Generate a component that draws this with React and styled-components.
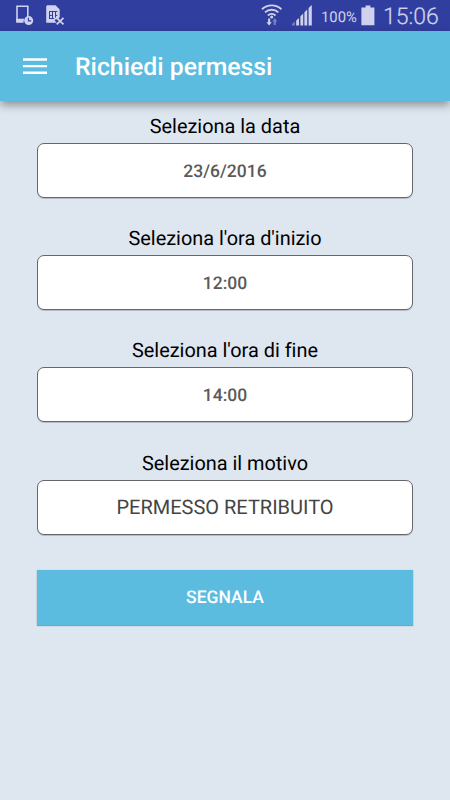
import React from "react";
import styled, { createGlobalStyle } from "styled-components";

const fields = [
  { label: "Seleziona la data", value: "23/6/2016" },
  { label: "Seleziona l'ora d'inizio", value: "12:00" },
  { label: "Seleziona l'ora di fine", value: "14:00" },
  { label: "Seleziona il motivo", value: "PERMESSO RETRIBUITO", large: true },
];

const PhoneClockIcon = () => (
  <svg width="18" height="21" viewBox="0 0 18 21" fill="none">
    <path d="M1 17V1.2h10.8V12" stroke="#cfd2ee" strokeWidth="1.6" />
    <path d="M.2 13.8h8.2a5.6 5.6 0 0 0-.8 4H.2z" fill="#cfd2ee" />
    <circle cx="12.7" cy="15.6" r="4.5" fill="#cfd2ee" />
    <path d="M12.4 12.8v3.1h2.8" stroke="#303f9f" strokeWidth="1.1" />
  </svg>
);

const SimErrorIcon = () => (
  <svg width="19" height="21" viewBox="0 0 19 21" fill="none">
    <path d="M1.2.2h8.3l4.2 4.4v7.7l-2.4 2.3-1.4-.6-1.3 1.4 2.1 2.3H.2V1.2z" fill="#cfd2ee" />
    <path
      d="M3.2 6.5h8.2M3.5 6.5v7.5M3.2 10.4h3M3.2 13.5h5M6.5 6.5v7.5M9.5 6.5v6M9.5 10.4h1.8"
      stroke="#303f9f"
      strokeWidth="1"
    />
    <path d="M10.7 12.8l6.8 6.6M17.5 12.8l-6.8 6.6" stroke="#cfd2ee" strokeWidth="1.7" />
  </svg>
);

const WifiIcon = () => (
  <svg width="22" height="23" viewBox="0 0 22 23" fill="none">
    <g stroke="#cfd2ee" strokeWidth="1.9">
      <path d="M1 5.2a14.3 14.3 0 0 1 19.4 0" />
      <path d="M4 8.4a9.9 9.9 0 0 1 13.4 0" />
      <path d="M6.9 11.5a5.6 5.6 0 0 1 7.6 0" />
    </g>
    <circle cx="10.7" cy="13" r="1.5" fill="#cfd2ee" />
    <path d="M7.1 14.6h2.1v3.6h1.6L8.1 21.6 5.4 18.2h1.7z" fill="#cfd2ee" />
    <path d="M12.7 21v-3.6h-1.4l2.5-3.3 2.5 3.3h-1.5V21z" fill="#7680c2" />
  </svg>
);

const SignalIcon = () => (
  <svg width="20" height="21" viewBox="0 0 20 21">
    <path d="M0 20.5v-1.4l2.8-2.6v4z" fill="#7680c2" />
    <path
      d="M4.2 20.5v-5.1L7 12.9v7.6zM8.4 20.5v-9.2l2.8-2.8v12zM12.4 20.5V7.2l2.8-2.8v16.1zM16.6 20.5V3.1L19.8 0v20.5z"
      fill="#cfd2ee"
    />
  </svg>
);

const BatteryIcon = () => (
  <svg width="14" height="21" viewBox="0 0 14 21">
    <path d="M4.6.4h4.8v2.2h4V20.3H.4V2.6h4.2z" fill="#cfd2ee" />
  </svg>
);

const MenuIcon = () => (
  <svg width="24" height="17" viewBox="0 0 24 17">
    <path d="M0 .3h24v2.4H0zM0 6.9h24v2.4H0zM0 13.5h24v2.4H0z" fill="#fff" />
  </svg>
);

export default function App() {
  return (
    <>
      <GlobalStyle />
      <Screen>
        <StatusBar>
          <PhoneClockIcon />
          <SimErrorIcon />
          <StatusRight>
            <WifiIcon />
            <SignalIcon />
            <BatteryLevel>100%</BatteryLevel>
            <BatteryIcon />
            <Clock>15:06</Clock>
          </StatusRight>
        </StatusBar>

        <AppBar>
          <MenuButton aria-label="Menu">
            <MenuIcon />
          </MenuButton>
          <Title>Richiedi permessi</Title>
        </AppBar>

        <Form>
          {fields.map((field) => (
            <Field key={field.label}>
              <Label>{field.label}</Label>
              <ValueButton $large={field.large}>{field.value}</ValueButton>
            </Field>
          ))}
          <SubmitButton>SEGNALA</SubmitButton>
        </Form>
      </Screen>
    </>
  );
}

/* ========== styled-components ========== */

const GlobalStyle = createGlobalStyle`
  * {
    box-sizing: border-box;
  }

  body {
    margin: 0;
    font-family: Roboto, "Liberation Sans", sans-serif;
    font-variant-ligatures: none;
    text-rendering: geometricPrecision;
  }

  button {
    font-family: inherit;
    text-rendering: inherit;
    cursor: pointer;
  }

  svg {
    display: block;
    flex-shrink: 0;
  }
`;

const Screen = styled.div`
  display: flex;
  flex-direction: column;
  width: 450px;
  height: 800px;
  background: #dee6f0;
  overflow: hidden;
`;

const StatusBar = styled.header`
  display: flex;
  align-items: center;
  gap: 12px;
  height: 31px;
  padding: 0 12px 0 16px;
  background: #303f9f;
  color: #cfd2ee;
`;

const StatusRight = styled.div`
  display: flex;
  align-items: center;
  margin-left: auto;

  svg + svg {
    margin-left: 9px;
  }
`;

const BatteryLevel = styled.span`
  width: 36px;
  margin: 3px 4px 0 9px;
  font-size: 14.8px;
  white-space: nowrap;
`;

const Clock = styled.span`
  width: 55px;
  margin: 2px 0 0 8px;
  font-size: 23px;
  font-weight: 300;
  line-height: 28px;
  white-space: nowrap;
  -webkit-text-stroke: 0.25px currentColor;
`;

const AppBar = styled.div`
  display: flex;
  align-items: center;
  height: 70px;
  padding: 0 23px;
  background: #5bbce0;
  box-shadow: 0 4px 9px rgba(0, 0, 0, 0.38);
  z-index: 1;
`;

const MenuButton = styled.button`
  display: flex;
  padding: 0;
  border: none;
  background: none;
`;

const Title = styled.h1`
  margin: 3px 0 0 28px;
  color: #fff;
  font-size: 24.8px;
  font-weight: 500;
  line-height: 30px;
`;

const Form = styled.main`
  display: flex;
  flex-direction: column;
  padding: 12px 37px 0;
`;

const Field = styled.section`
  display: flex;
  flex-direction: column;
  height: 112.2px;
`;

const Label = styled.label`
  height: 30px;
  color: #000;
  font-size: 19.9px;
  line-height: 27px;
  text-align: center;
`;

const ValueButton = styled.button`
  height: 55px;
  padding: ${({ $large }) => ($large ? "0" : "2px 0 0")};
  border: 1px solid #65676b;
  border-radius: 7px;
  background: #fff;
  box-shadow: 0 1px 0 rgba(0, 0, 0, 0.18);
  color: ${({ $large }) => ($large ? "#444" : "#5a5a5a")};
  font-size: ${({ $large }) => ($large ? "20px" : "17.5px")};
  font-weight: ${({ $large }) => ($large ? 400 : 500)};
`;

const SubmitButton = styled.button`
  height: 55px;
  margin-top: 8.2px;
  padding: 2px 0 0;
  border: none;
  background: #5bbce0;
  box-shadow: 0 1px 1px rgba(0, 0, 0, 0.3), 0 0 1px rgba(0, 0, 0, 0.2);
  color: #fff;
  font-size: 17.5px;
  font-weight: 500;
`;
